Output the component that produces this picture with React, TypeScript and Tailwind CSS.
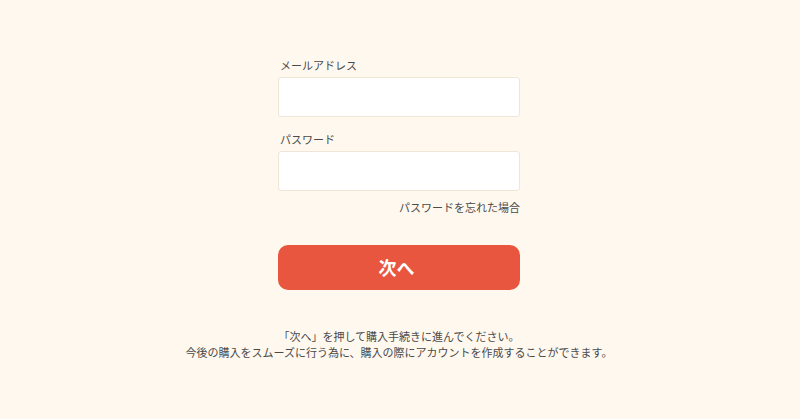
import React from 'react';

const font = { fontFamily: '"Noto Sans CJK JP", "Noto Sans", sans-serif' };

export default function App() {
    return (
        <div className="w-[800px] h-[419px] bg-[#fff8ef] flex flex-col items-center pr-[2px] text-[#4a4a4a]" style={font}>
            <div className="w-[242px] mt-[57px] flex flex-col">
                <label className="text-[11px] leading-[16px] ml-[2px]">メールアドレス</label>
                <input
                    type="text"
                    className="mt-[4px] h-[40px] w-full bg-white border border-[#f0e6d8] rounded-[3px] outline-none px-3 text-sm"
                />
                <label className="mt-[14px] text-[11px] leading-[16px] ml-[2px]">パスワード</label>
                <input
                    type="password"
                    className="mt-[4px] h-[40px] w-full bg-white border border-[#f0e6d8] rounded-[3px] outline-none px-3 text-sm"
                />
                <div className="mt-[8px] text-right text-[11px] leading-[16px]">パスワードを忘れた場合</div>
                <button className="mt-[30px] h-[45px] w-full bg-[#e9563f] rounded-[10px] text-white text-[18px] font-bold pr-[5px]">
                    次へ
                </button>
            </div>
            <div className="mt-[38px] text-center text-[11px] leading-[16px]">
                <p>「次へ」を押して購入手続きに進んでください。</p>
                <p>今後の購入をスムーズに行う為に、購入の際にアカウントを作成することができます。</p>
            </div>
        </div>
    );
}
